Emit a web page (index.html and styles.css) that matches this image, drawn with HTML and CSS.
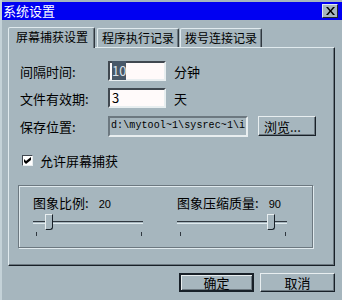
FILE: index.html
```html
<!DOCTYPE html>
<html>
<head>
  <title>系统设置</title>
  <link rel="stylesheet" href="styles.css">
</head>
<body>
  <div class="window">
    <div class="titlebar">
      <span class="title">系统设置</span>
      <span class="close">
        <svg width="9" height="8" viewBox="0 0 9 8"><path d="M0 0h2l2.5 3 2.5-3h2l-3.5 4 3.5 4h-2l-2.5-3-2.5 3h-2l3.5-4z" fill="#000"/></svg>
      </span>
    </div>

    <div class="tabs">
      <div class="tab active">屏幕捕获设置</div>
      <div class="tab">程序执行记录</div>
      <div class="tab">拨号连接记录</div>
    </div>

    <div class="panel">
      <div class="row">
        <label>间隔时间:</label>
        <div class="field short"><span class="sel">10</span></div>
        <span class="unit">分钟</span>
      </div>
      <div class="row">
        <label>文件有效期:</label>
        <div class="field short">3</div>
        <span class="unit">天</span>
      </div>
      <div class="row path-row">
        <label>保存位置:</label>
        <div class="field path">d:\mytool~1\sysrec~1\i</div>
        <button class="btn browse">浏览...</button>
      </div>
      <div class="check-row">
        <span class="checkbox">
          <svg width="7" height="7" viewBox="0 0 7 7"><path d="M0 2l2 2 5-4v3l-5 4-2-2z" fill="#000"/></svg>
        </span>
        <span>允许屏幕捕获</span>
      </div>

      <div class="group">
        <div class="slider-box">
          <div class="slider-label">图象比例:<span class="val">20</span></div>
          <div class="slider">
            <div class="track"></div>
            <div class="thumb" style="left: 12px"></div>
          </div>
          <div class="ticks"><span></span><span></span></div>
        </div>
        <div class="slider-box">
          <div class="slider-label">图象压缩质量:<span class="val">90</span></div>
          <div class="slider">
            <div class="track"></div>
            <div class="thumb" style="left: 90px"></div>
          </div>
          <div class="ticks"><span></span><span></span></div>
        </div>
      </div>
    </div>

    <div class="footer">
      <button class="btn ok">确定</button>
      <button class="btn">取消</button>
    </div>
  </div>
</body>
</html>
```

FILE: styles.css
```css
body {
  margin: 0;
  background-color: #a6b6be;
  font-family: "Noto Sans CJK SC", "Liberation Sans", sans-serif;
  font-size: 12px;
  color: #000;
}
.window {
  width: 342px;
  height: 300px;
  box-sizing: border-box;
  padding-top: 2px;
  border-left: 2px solid #c4d2d8;
  background-color: #a6b6be;
  overflow: hidden;
}
.titlebar {
  display: flex;
  align-items: center;
  justify-content: space-between;
  height: 18px;
  margin-left: -2px;
  padding: 0 4px 0 3px;
  background-color: #0000f2;
  color: #fff;
}
.title {
  font-size: 13px;
  line-height: 18px;
}
.close {
  display: flex;
  align-items: center;
  justify-content: center;
  width: 14px;
  height: 12px;
  background-color: #a6b6be;
  border: 1px solid;
  border-color: #e0eaee #202830 #202830 #e0eaee;
}
.tabs {
  display: flex;
  align-items: flex-end;
  height: 27px;
  margin-left: 6px;
}
.tab {
  height: 18px;
  line-height: 18px;
  padding: 0 4px;
  margin-right: 1px;
  font-size: 12px;
  border: 1px solid;
  border-bottom: none;
  border-color: #e0eaee #303840 transparent #e0eaee;
  border-radius: 2px 2px 0 0;
  box-shadow: inset -1px 0 0 #6c7880;
}
.tab.active {
  height: 20px;
  padding: 0 6px 0 7px;
  margin-bottom: -1px;
  margin-right: 2px;
  background-color: #a6b6be;
  position: relative;
  z-index: 1;
}
.panel {
  height: 219px;
  margin: 0 7px 0 6px;
  box-sizing: border-box;
  padding: 13px 0 0 11px;
  border: 1px solid;
  border-color: #e0eaee #182028 #182028 #e0eaee;
  box-shadow: inset -1px -1px 0 #6c7880;
}
.row {
  display: flex;
  align-items: center;
  height: 20px;
  margin-bottom: 7px;
}
.row label {
  width: 88px;
  font-size: 13px;
}
.field {
  height: 20px;
  box-sizing: border-box;
  line-height: 15px;
  padding-left: 2px;
  border: 2px solid;
  border-color: #404850 #e8eef0 #e8eef0 #404850;
  background-color: #fffafa;
  font-size: 13px;
}
.short {
  width: 58px;
}
.sel {
  background-color: #485868;
  color: #d8e0e8;
}
.unit {
  margin-left: 8px;
  font-size: 13px;
}
.path-row {
  height: 22px;
  margin-top: 3px;
  margin-bottom: 14px;
}
.path {
  width: 140px;
  height: 21px;
  line-height: 16px;
  padding-left: 1px;
  background-color: #a6b6be;
  font-family: "Liberation Mono", monospace;
  font-size: 10px;
  letter-spacing: 0.1px;
  white-space: nowrap;
  overflow: hidden;
  border-color: #6c7880 #e8eef0 #e8eef0 #6c7880;
}
.btn {
  height: 20px;
  padding: 0;
  font-family: "Noto Sans CJK SC", sans-serif;
  font-size: 13px;
  color: #000;
  background-color: #a6b6be;
  border: 1px solid;
  border-color: #e8eef0 #182028 #182028 #e8eef0;
  box-shadow: inset -1px -1px 0 #6c7880;
}
.browse {
  width: 58px;
  margin-left: 10px;
  text-align: left;
  padding-left: 5px;
}
.check-row {
  display: flex;
  align-items: center;
  gap: 7px;
  margin-left: 2px;
  font-size: 13px;
}
.checkbox {
  display: flex;
  align-items: center;
  justify-content: center;
  width: 9px;
  height: 9px;
  border: 1px solid;
  border-color: #404850 #e8eef0 #e8eef0 #404850;
  background-color: #fff;
}
.group {
  display: flex;
  gap: 28px;
  width: 295px;
  height: 63px;
  margin: 15px 0 0 -2px;
  box-sizing: border-box;
  padding: 9px 0 0 14px;
  border: 1px solid #6c7880;
  box-shadow: 1px 1px 0 #e0eaee, inset 1px 1px 0 #e0eaee;
}
.slider-box {
  width: 116px;
}
.slider-label {
  font-size: 13px;
  line-height: 16px;
}
.val {
  margin-left: 10px;
  font-family: "Liberation Sans", sans-serif;
  font-size: 11px;
}
.slider {
  position: relative;
  height: 20px;
}
.track {
  position: absolute;
  top: 9px;
  left: 0;
  width: 110px;
  height: 1px;
  border-top: 1px solid #303840;
  border-bottom: 1px solid #e0eaee;
}
.thumb {
  position: absolute;
  top: 2px;
  width: 6px;
  height: 14px;
  background-color: #a6b6be;
  border: 1px solid;
  border-color: #e8eef0 #182028 #182028 #e8eef0;
  border-radius: 0 0 3px 0;
}
.ticks {
  display: flex;
  justify-content: space-between;
  width: 106px;
  padding-left: 3px;
}
.ticks span {
  width: 1px;
  height: 4px;
  background-color: #303840;
}
.footer {
  display: flex;
  justify-content: flex-end;
  gap: 6px;
  padding: 7px 7px 0 0;
}
.footer .btn {
  width: 75px;
  height: 19px;
  line-height: 15px;
}
.footer .ok {
  border: 2px solid #182028;
  box-shadow: inset 1px 1px 0 #e8eef0, inset -1px -1px 0 #6c7880;
}
```
